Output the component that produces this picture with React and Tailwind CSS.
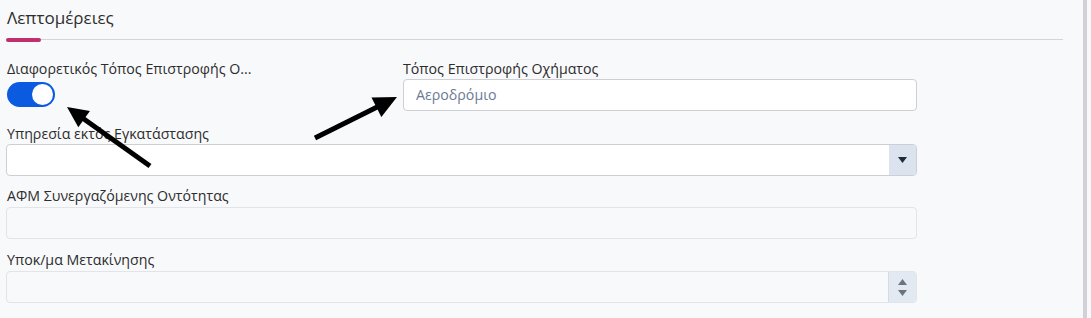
import React from "react";

function Arrow({ tip, tail, len, half }) {
  const dx = tip[0] - tail[0];
  const dy = tip[1] - tail[1];
  const L = Math.hypot(dx, dy);
  const ux = dx / L;
  const uy = dy / L;
  const bx = tip[0] - ux * len;
  const by = tip[1] - uy * len;
  const px = -uy * half;
  const py = ux * half;
  return (
    <g>
      <line x1={tail[0]} y1={tail[1]} x2={bx + ux * 2} y2={by + uy * 2} stroke="#000" strokeWidth="5" />
      <polygon points={`${tip[0]},${tip[1]} ${bx + px},${by + py} ${bx - px},${by - py}`} fill="#000" />
    </g>
  );
}

export default function App() {
  const font = { fontFamily: '"Open Sans", "Noto Sans", sans-serif' };
  return (
    <div className="relative flex h-[318px] w-[1091px] bg-[#f8f9fb] text-[#2d2d2d]" style={font}>
      <div className="w-[1083px] pl-[6px] pr-[20px]">
        <div className="pt-[6px] text-[17px] leading-[24px] pl-[1px]">Λεπτομέρειες</div>
        <div className="relative mt-[8px] h-[4px] w-[1057px]">
          <div className="absolute left-0 right-0 top-[1px] h-px bg-[#d4d4d9]" />
          <div className="absolute left-0 top-0 h-[4px] w-[35px] rounded-full bg-[#c0306a]" />
        </div>
        <div className="grid grid-cols-[397px_514px] mt-[17px]">
          <div>
            <div className="text-[14.2px] leading-[20px] pl-[1px] truncate w-[256px]">Διαφορετικός Τόπος Επιστροφής Ο...</div>
            <div className="mt-[3px] ml-[1px] flex h-[25px] w-[48px] items-center justify-end rounded-full bg-[#0b5be1] pr-[2px]">
              <div className="h-[21px] w-[21px] rounded-full bg-white" />
            </div>
          </div>
          <div>
            <div className="text-[14.2px] leading-[20px]">Τόπος Επιστροφής Οχήματος</div>
            <div className="mt-0 flex h-[32px] items-center rounded-[4px] border border-[#cfcfd3] bg-white px-[12px] text-[14.2px] text-[#6b7a94]">Αεροδρόμιο</div>
          </div>
        </div>
        <div className="mt-[13px] w-[911px]">
          <div className="text-[14.2px] leading-[20px] pl-[1px]">Υπηρεσία εκτός Εγκατάστασης</div>
          <div className="flex h-[32px] overflow-hidden rounded-[4px] border border-[#cfcfd3] bg-white">
            <div className="flex-1" />
            <div className="flex w-[27px] items-center justify-center bg-[#dbe3ef]">
              <svg width="9" height="6" viewBox="0 0 9 6"><polygon points="0,0 9,0 4.5,6" fill="#1f2a3a" /></svg>
            </div>
          </div>
        </div>
        <div className="mt-[10px] w-[911px]">
          <div className="text-[14.2px] leading-[20px] pl-[1px]">ΑΦΜ Συνεργαζόμενης Οντότητας</div>
          <div className="mt-px h-[32px] rounded-[4px] border border-[#e2e4e9] bg-[#f8f9fb]" />
        </div>
        <div className="mt-[11px] w-[911px]">
          <div className="text-[14.2px] leading-[20px] pl-[1px]">Υποκ/μα Μετακίνησης</div>
          <div className="mt-px flex h-[32px] overflow-hidden rounded-[4px] border border-[#e2e4e9] bg-[#f8f9fb]">
            <div className="flex-1" />
            <div className="flex w-[28px] flex-col items-center justify-center gap-[5px] border-l border-[#d6dbe3] bg-[#e3e9f1]">
              <svg width="9" height="6" viewBox="0 0 9 6"><polygon points="0,6 9,6 4.5,0" fill="#6b7280" /></svg>
              <svg width="9" height="6" viewBox="0 0 9 6"><polygon points="0,0 9,0 4.5,6" fill="#6b7280" /></svg>
            </div>
          </div>
        </div>
      </div>
      <div className="w-[4px] bg-[#d2d2d6]" />
      <div className="flex-1" />
      <svg className="pointer-events-none absolute left-0 top-0" width="1091" height="318">
        <Arrow tip={[67, 107]} tail={[150, 166]} len={21} half={10} />
        <Arrow tip={[397, 97]} tail={[315, 138]} len={23} half={11} />
      </svg>
    </div>
  );
}
